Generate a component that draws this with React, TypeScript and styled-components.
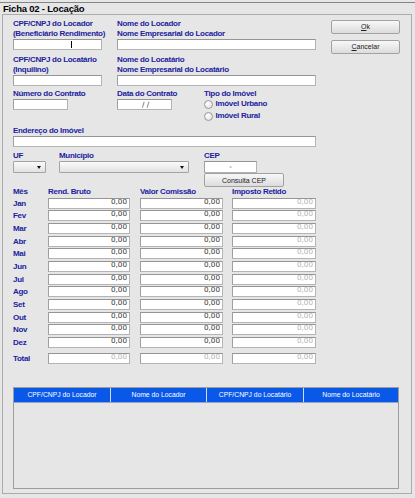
import React from "react";
import styled, { createGlobalStyle } from "styled-components";

const Global = createGlobalStyle`
  html, body { margin: 0; padding: 0; background: #e6e6e6; }
  body { font-family: "Liberation Sans", Arial, sans-serif; }
`;

const Page = styled.div`
  width: 415px;
  height: 498px;
  box-sizing: border-box;
  padding-top: 2px;
  background: #e6e6e6;
  overflow: hidden;
`;

const TitleBar = styled.div`
  border-top: 1px solid #858585;
  height: 11px;
  padding-left: 3px;
  font: bold 9.5px/11px "Liberation Sans", Arial, sans-serif;
  letter-spacing: -0.2px;
  color: #000;
  white-space: nowrap;
`;

const Panel = styled.div`
  margin-left: 2px;
  width: 410px;
  height: 480px;
  box-sizing: border-box;
  border: 1px solid #ababab;
  padding: 4px 0 0 10px;
  display: flex;
  flex-direction: column;
`;

const Top = styled.div`
  display: flex;
  align-items: flex-start;
`;

const Form = styled.div`
  width: 303px;
  display: flex;
  flex-direction: column;
`;

const Actions = styled.div`
  margin-left: 15px;
  padding-top: 0.5px;
  width: 69px;
  display: flex;
  flex-direction: column;
  gap: 6px;
`;

const Row = styled.div<{ $mt?: number }>`
  display: flex;
  align-items: flex-start;
  margin-top: ${(p) => p.$mt ?? 0}px;
`;

const Field = styled.div<{ $w?: number }>`
  width: ${(p) => (p.$w ? `${p.$w}px` : "auto")};
  flex: none;
  display: flex;
  flex-direction: column;
  align-items: flex-start;
`;

const Label = styled.div`
  font: bold 8px/10px "Liberation Sans", Arial, sans-serif;
  letter-spacing: -0.3px;
  color: #22229e;
  white-space: nowrap;
`;

const MonthName = styled(Label)`
  line-height: 11px;
`;

const TextBox = styled.div<{
  $w: number;
  $h?: number;
  $align?: string;
  $muted?: boolean;
  $lh?: number;
}>`
  position: relative;
  box-sizing: border-box;
  width: ${(p) => p.$w}px;
  height: ${(p) => p.$h ?? 11}px;
  background: #fff;
  border: 1px solid #b4b4b4;
  border-top-color: #959595;
  border-left-color: #a0a0a0;
  font-family: "DejaVu Sans", Verdana, sans-serif;
  font-size: 7.2px;
  line-height: ${(p) => p.$lh ?? 5.5}px;
  color: ${(p) => (p.$muted ? "#b3b3b3" : "#333")};
  text-align: ${(p) => p.$align ?? "left"};
  padding: 0 2px;
  white-space: nowrap;
  overflow: hidden;
`;

const Caret = styled.span`
  position: absolute;
  left: 57px;
  top: 1px;
  width: 1px;
  height: 7px;
  background: #000;
`;

const Select = styled.div<{ $w: number }>`
  box-sizing: border-box;
  width: ${(p) => p.$w}px;
  height: 12px;
  border: 1px solid #a3a3a3;
  border-radius: 1px;
  background: linear-gradient(#fbfbfb, #e2e2e2);
  display: flex;
  align-items: center;
  justify-content: flex-end;
  padding-right: 4px;
`;

const Arrow = styled.span`
  width: 0;
  height: 0;
  border-left: 2.5px solid transparent;
  border-right: 2.5px solid transparent;
  border-top: 3px solid #111;
`;

const Button = styled.button<{ $w: number; $h: number }>`
  box-sizing: border-box;
  width: ${(p) => p.$w}px;
  height: ${(p) => p.$h}px;
  margin: 0;
  padding: 0;
  border: 1px solid #a2a2a2;
  border-radius: 2px;
  background: linear-gradient(#f8f8f8, #dcdcdc);
  font: 7px/1 "Liberation Sans", Arial, sans-serif;
  color: #222;
  display: flex;
  align-items: center;
  justify-content: center;
  u {
    text-decoration: underline;
  }
`;

const RadioGroup = styled.div`
  margin-top: -1px;
  display: flex;
  flex-direction: column;
`;

const RadioRow = styled.div`
  display: flex;
  align-items: center;
  gap: 2.5px;
  height: 12px;
`;

const RadioDot = styled.span`
  width: 9px;
  height: 9px;
  box-sizing: border-box;
  border-radius: 50%;
  border: 1px solid #9a9a9a;
  background: radial-gradient(circle at 40% 35%, #ffffff, #dcdcdc);
`;

const MonthGrid = styled.div`
  display: grid;
  grid-template-columns: 35px 92px 92px 84px;
  grid-template-rows: 9px;
  grid-auto-rows: 11px;
  row-gap: 1.67px;
`;

const TotalGrid = styled.div`
  margin-top: 5.33px;
  display: grid;
  grid-template-columns: 35px 92px 92px 84px;
  grid-auto-rows: 11px;
`;

const Table = styled.div`
  margin-top: 22.7px;
  width: 386px;
  height: 102px;
  box-sizing: border-box;
  border: 1px solid #9d9d9d;
  background: #e6e6e6;
`;

const HeadRow = styled.div`
  display: grid;
  grid-template-columns: 97px 96px 97px 94px;
  height: 15px;
  box-sizing: border-box;
  background: #0a58e8;
  border-bottom: 1px solid #8ea6cc;
`;

const HeadCell = styled.div<{ $last?: boolean }>`
  border-right: ${(p) => (p.$last ? "none" : "1px solid #d2dcee")};
  font: 6.8px/14px "Liberation Sans", Arial, sans-serif;
  color: #fff;
  text-align: center;
  white-space: nowrap;
`;

const months = ["Jan", "Fev", "Mar", "Abr", "Mai", "Jun", "Jul", "Ago", "Set", "Out", "Nov", "Dez"];

export default function App() {
  return (
    <>
      <Global />
      <Page>
        <TitleBar>Ficha 02 - Locação</TitleBar>
        <Panel>
          <Top>
            <Form>
              <Row>
                <Field $w={104}>
                  <Label>CPF/CNPJ do Locador</Label>
                  <Label>(Beneficiário Rendimento)</Label>
                  <TextBox $w={89}>
                    <Caret />
                  </TextBox>
                </Field>
                <Field>
                  <Label>Nome do Locador</Label>
                  <Label>Nome Empresarial do Locador</Label>
                  <TextBox $w={199} />
                </Field>
              </Row>
              <Row $mt={5}>
                <Field $w={104}>
                  <Label>CPF/CNPJ do Locatário</Label>
                  <Label>(Inquilino)</Label>
                  <TextBox $w={89} />
                </Field>
                <Field>
                  <Label>Nome do Locatário</Label>
                  <Label>Nome Empresarial do Locatário</Label>
                  <TextBox $w={199} />
                </Field>
              </Row>
              <Row $mt={3}>
                <Field $w={104}>
                  <Label>Número do Contrato</Label>
                  <TextBox $w={54.5} />
                </Field>
                <Field $w={87}>
                  <Label>Data do Contrato</Label>
                  <TextBox $w={55} $align="center" $lh={10}>
                    &nbsp;/ /
                  </TextBox>
                </Field>
                <Field>
                  <Label>Tipo do Imóvel</Label>
                  <RadioGroup>
                    <RadioRow>
                      <RadioDot />
                      <Label>Imóvel Urbano</Label>
                    </RadioRow>
                    <RadioRow>
                      <RadioDot />
                      <Label>Imóvel Rural</Label>
                    </RadioRow>
                  </RadioGroup>
                </Field>
              </Row>
              <Row $mt={4}>
                <Field>
                  <Label>Endereço do Imóvel</Label>
                  <TextBox $w={303} />
                </Field>
              </Row>
              <Row $mt={4}>
                <Field $w={46}>
                  <Label>UF</Label>
                  <Select $w={32.5}>
                    <Arrow />
                  </Select>
                </Field>
                <Field $w={145}>
                  <Label>Município</Label>
                  <Select $w={130}>
                    <Arrow />
                  </Select>
                </Field>
                <Field>
                  <Label>CEP</Label>
                  <TextBox $w={53} $h={12} $align="center" $lh={10}>
                    -
                  </TextBox>
                  <Button $w={80} $h={14}>Consulta CEP</Button>
                </Field>
              </Row>
            </Form>
            <Actions>
              <Button $w={69} $h={14}>
                <u>O</u>k
              </Button>
              <Button $w={69} $h={14}>
                <u>C</u>ancelar
              </Button>
            </Actions>
          </Top>

          <MonthGrid>
            <Label>Mês</Label>
            <Label>Rend. Bruto</Label>
            <Label>Valor Comissão</Label>
            <Label>Imposto Retido</Label>
            {months.map((m) => (
              <React.Fragment key={m}>
                <MonthName>{m}</MonthName>
                <TextBox $w={82} $align="right">0,00</TextBox>
                <TextBox $w={83} $align="right">0,00</TextBox>
                <TextBox $w={84} $align="right" $muted>0,00</TextBox>
              </React.Fragment>
            ))}
          </MonthGrid>
          <TotalGrid>
            <MonthName>Total</MonthName>
            <TextBox $w={82} $align="right" $muted>0,00</TextBox>
            <TextBox $w={83} $align="right" $muted>0,00</TextBox>
            <TextBox $w={84} $align="right" $muted>0,00</TextBox>
          </TotalGrid>

          <Table>
            <HeadRow>
              <HeadCell>CPF/CNPJ do Locador</HeadCell>
              <HeadCell>Nome do Locador</HeadCell>
              <HeadCell>CPF/CNPJ do Locatário</HeadCell>
              <HeadCell $last>Nome do Locatário</HeadCell>
            </HeadRow>
          </Table>
        </Panel>
      </Page>
    </>
  );
}
